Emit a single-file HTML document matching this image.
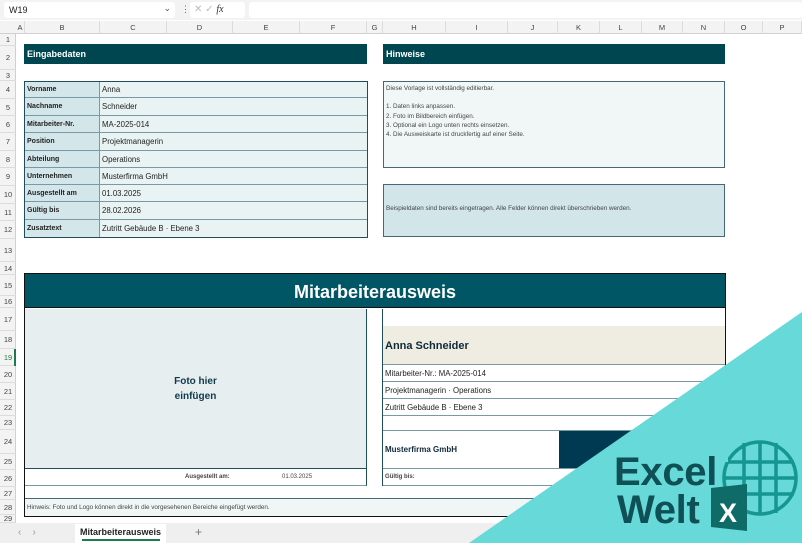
<!DOCTYPE html>
<html><head><meta charset="utf-8"><style>
*{margin:0;padding:0;box-sizing:border-box}
body{width:802px;height:543px;overflow:hidden;background:#fff;font-family:"Liberation Sans",sans-serif;position:relative;font-size:8px;color:#222}
.a{position:absolute}
.bar{background:#004650;color:#fff;font-weight:bold;font-size:9px;padding-left:3px;display:flex;align-items:center}
.cell{position:absolute;display:flex;align-items:center;padding-left:2px;font-size:7.8px}
</style></head><body>
<div class="a" style="left:0;top:0;width:802px;height:20px;background:#f3f3f3"></div>
<div class="a" style="left:4px;top:2px;width:171px;height:16px;background:#fff;border-radius:3px;font-size:9px;padding:3px 5px">W19<span style="position:absolute;right:4px;top:1px;color:#555">⌄</span></div>
<div class="a" style="left:181px;top:4px;color:#666;font-size:9px">⋮</div>
<div class="a" style="left:190px;top:2px;width:55px;height:16px;background:#fff;border-radius:3px;font-size:10px;color:#bbb;padding:2px 4px">✕ ✓ <i style="color:#333;font-family:'Liberation Serif'">fx</i></div>
<div class="a" style="left:249px;top:2px;width:553px;height:16px;background:#fff;border-radius:3px"></div>
<div class="a" style="left:0;top:21px;width:802px;height:13px;background:#f3f3f3;border-bottom:1px solid #d0d0d0;font-size:7.5px;color:#444"></div>
<div class="a" style="left:0;top:34px;width:16px;height:489px;background:#f3f3f3;border-right:1px solid #d0d0d0"></div>
<div id="cols"></div>
<div id="rows"></div>
<div class="a bar" style="left:24px;top:44px;width:343px;height:20px">Eingabedaten</div>
<div class="a bar" style="left:383px;top:44px;width:342px;height:20px">Hinweise</div>
<div class="a" style="left:24px;top:81px;width:344px;height:157px;border:1px solid #1f4d5a;background:#eaf3f4"></div>
<div class="a" style="left:25px;top:82px;width:75px;height:155px;background:#d3e6ea;border-right:1px solid #7a99a6"></div>
<div id="tbl"></div>
<div class="a" style="left:383px;top:81px;width:342px;height:87px;border:1px solid #44687a;background:#f1f7f7;font-size:6.3px;color:#444;padding:2px 2px;line-height:9.2px">Diese Vorlage ist vollständig editierbar.<br><br>1. Daten links anpassen.<br>2. Foto im Bildbereich einfügen.<br>3. Optional ein Logo unten rechts einsetzen.<br>4. Die Ausweiskarte ist druckfertig auf einer Seite.</div>
<div class="a" style="left:383px;top:184px;width:342px;height:53px;border:1px solid #44687a;background:#d2e6e9;font-size:6.3px;color:#444;padding:20px 2px 0">Beispieldaten sind bereits eingetragen. Alle Felder können direkt überschrieben werden.</div>
<div class="a" style="left:24px;top:273px;width:702px;height:244px;border:1px solid #111;background:#fff"></div>
<div class="a" style="left:25px;top:274px;width:700px;height:34px;background:#005665;color:#fff;font-weight:bold;font-size:18px;text-align:center;line-height:36px;border-bottom:1px solid #111">Mitarbeiterausweis</div>
<div class="a" style="left:25px;top:309px;width:342px;height:160px;background:#e6eef0;border-right:1px solid #1f4d5a;border-bottom:1px solid #1f4d5a;display:flex;align-items:center;justify-content:center;text-align:center;font-weight:bold;font-size:10px;color:#0f3a4a;line-height:15px">Foto hier<br>einfügen</div>
<div class="a" style="left:25px;top:469px;width:342px;height:17px;border-right:1px solid #1f4d5a;border-bottom:1px solid #7a99a6;font-size:6px"><span class="a" style="left:160px;top:5px;font-weight:bold;color:#444">Ausgestellt am:</span><span class="a" style="left:257px;top:5px;color:#444">01.03.2025</span></div>
<div class="a" style="left:25px;top:498px;width:700px;height:18px;background:#f0f6f6;border-top:1px solid #44687a;font-size:6.3px;color:#444;padding:5px 2px">Hinweis: Foto und Logo können direkt in die vorgesehenen Bereiche eingefügt werden.</div>
<div class="a" style="left:382px;top:309px;width:1px;height:177px;background:#1f4d5a"></div>
<div class="a" style="left:383px;top:326px;width:342px;height:39px;background:#efece2;border-bottom:1px solid #7a99a6;font-weight:bold;font-size:11px;color:#0f2a3a;padding:14px 2px 0">Anna Schneider</div>
<div class="cell" style="left:383px;top:365px;width:342px;height:17px;border-bottom:1px solid #7a99a6">Mitarbeiter-Nr.: MA-2025-014</div>
<div class="cell" style="left:383px;top:382px;width:342px;height:17px;border-bottom:1px solid #7a99a6">Projektmanagerin · Operations</div>
<div class="cell" style="left:383px;top:399px;width:342px;height:17px;border-bottom:1px solid #7a99a6">Zutritt Gebäude B · Ebene 3</div>
<div class="cell" style="left:383px;top:430px;width:342px;height:39px;border-top:1px solid #7a99a6;border-bottom:1px solid #7a99a6;font-weight:bold;font-size:8px;color:#0f2a3a">Musterfirma GmbH</div>
<div class="a" style="left:559px;top:431px;width:166px;height:37px;background:#003a52"></div>
<div class="cell" style="left:383px;top:469px;width:342px;height:17px;border-bottom:1px solid #7a99a6;font-size:6px;font-weight:bold;color:#444">Gültig bis:</div>
<div class="a" style="left:0;top:523px;width:802px;height:20px;background:#efefef"></div>
<div class="a" style="left:18px;top:527px;color:#999;font-size:10px">‹&nbsp;&nbsp;&nbsp;&nbsp;›</div>
<div class="a" style="left:75px;top:524px;width:91px;height:19px;background:#fff;font-size:9px;font-weight:bold;text-align:center;padding-top:3px;color:#222">Mitarbeiterausweis<div style="width:78px;height:2px;background:#1e7a4a;margin:2px auto 0"></div></div>
<div class="a" style="left:195px;top:525px;color:#777;font-size:12px">+</div>
<svg class="a" style="left:0;top:0" width="802" height="543">
<polygon points="469,543 802,312 802,543" fill="#66d9d8"/>
<g fill="none" stroke="#159691" stroke-width="3.5">
<circle cx="760" cy="478" r="36"/>
<line x1="744" y1="443" x2="744" y2="513"/><line x1="760" y1="442" x2="760" y2="514"/><line x1="776" y1="443" x2="776" y2="513"/>
<line x1="726" y1="462" x2="794" y2="462"/><line x1="724" y1="478" x2="796" y2="478"/><line x1="726" y1="494" x2="794" y2="494"/>
</g>
<rect x="721" y="440" width="7" height="22" fill="#66d9d8"/>
<text x="614" y="485" font-family="Liberation Sans" font-weight="bold" font-size="40" fill="#0f4f56" letter-spacing="-0.3">Excel</text>
<text x="617" y="523" font-family="Liberation Sans" font-weight="bold" font-size="40" fill="#0f4f56" letter-spacing="-0.3">Welt</text>
<polygon points="711,488 747,484 747,531 711,527" fill="#0e6b68"/>
<text x="719" y="522" font-family="Liberation Sans" font-weight="bold" font-size="27" fill="#fff">X</text>
</svg>
<script>
var cols=[["A",16,25],["B",25,100],["C",100,167],["D",167,233],["E",233,300],["F",300,367],["G",367,383],["H",383,446],["I",446,508],["J",508,558],["K",558,600],["L",600,642],["M",642,683],["N",683,725],["O",725,763],["P",763,802]];
var h="";cols.forEach(function(c){h+='<div class="a" style="left:'+c[1]+'px;top:21px;width:'+(c[2]-c[1])+'px;height:13px;border-right:1px solid #dcdcdc;text-align:center;font-size:7.5px;line-height:13px;color:#444">'+c[0]+'</div>'});
document.getElementById("cols").innerHTML=h;
var ry=[34,46,70,81,99,116,133,151,168,186,204,221,239,262,275,296,308,331,349,366,383,400,416,430,454,470,487,500,515,523];
h="";for(var i=0;i<ry.length-1;i++){var c=i==18?'#1e7a4a':'#444';h+='<div class="a" style="left:0;top:'+ry[i]+'px;width:16px;height:'+(ry[i+1]-ry[i])+'px;border-bottom:1px solid #dcdcdc;text-align:center;font-size:7.5px;color:'+c+';display:flex;align-items:center;justify-content:center;overflow:hidden">'+(i+1)+'</div>'}
h+='<div class="a" style="left:14px;top:349px;width:2px;height:17px;background:#1e7a4a"></div>';
document.getElementById("rows").innerHTML=h;
var t=[["Vorname","Anna"],["Nachname","Schneider"],["Mitarbeiter-Nr.","MA-2025-014"],["Position","Projektmanagerin"],["Abteilung","Operations"],["Unternehmen","Musterfirma GmbH"],["Ausgestellt am","01.03.2025"],["Gültig bis","28.02.2026"],["Zusatztext","Zutritt Gebäude B · Ebene 3"]];
var ty=[81,98,116,133,151,168,185,202,220,237];h="";
t.forEach(function(r,i){var y=ty[i],hh=ty[i+1]-y;
h+='<div class="cell" style="left:25px;top:'+y+'px;width:75px;height:'+hh+'px;font-weight:bold;font-size:7px;'+(i<8?'border-bottom:1px solid #7a99a6':'')+'">'+r[0]+'</div>';
h+='<div class="cell" style="left:100px;top:'+y+'px;width:267px;height:'+hh+'px;'+(i<8?'border-bottom:1px solid #7a99a6':'')+'">'+r[1]+'</div>'});
document.getElementById("tbl").innerHTML=h;
</script>
</body></html>
